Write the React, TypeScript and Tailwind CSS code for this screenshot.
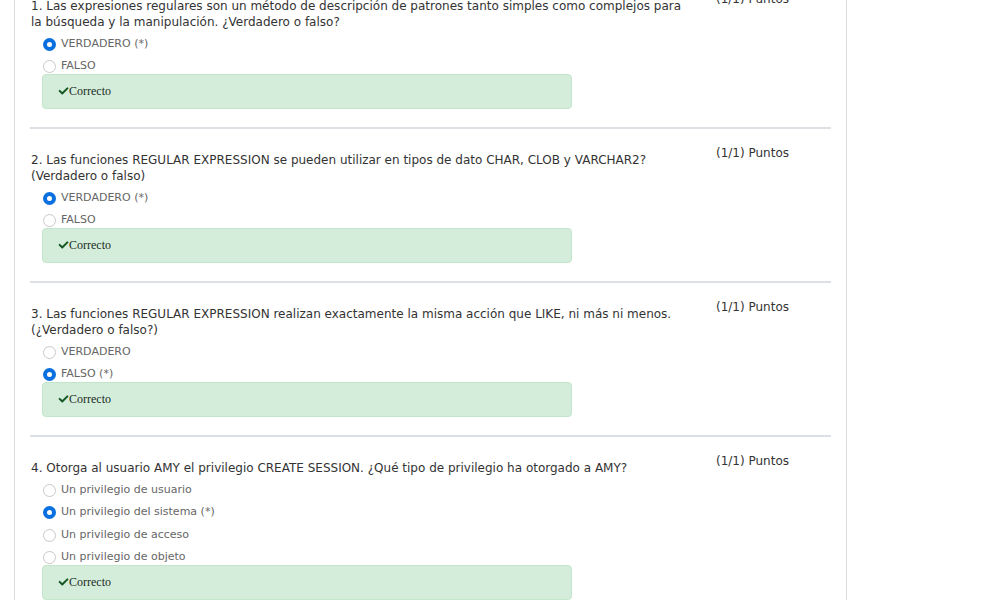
import React from "react";

type Question = {
  id: number;
  text: string;
  options: string[];
  selected: number;
};

const questions: Question[] = [
  {
    id: 1,
    text: "1. Las expresiones regulares son un método de descripción de patrones tanto simples como complejos para la búsqueda y la manipulación. ¿Verdadero o falso?",
    options: ["VERDADERO (*)", "FALSO"],
    selected: 0,
  },
  {
    id: 2,
    text: "2. Las funciones REGULAR EXPRESSION se pueden utilizar en tipos de dato CHAR, CLOB y VARCHAR2? (Verdadero o falso)",
    options: ["VERDADERO (*)", "FALSO"],
    selected: 0,
  },
  {
    id: 3,
    text: "3. Las funciones REGULAR EXPRESSION realizan exactamente la misma acción que LIKE, ni más ni menos. (¿Verdadero o falso?)",
    options: ["VERDADERO", "FALSO (*)"],
    selected: 1,
  },
  {
    id: 4,
    text: "4. Otorga al usuario AMY el privilegio CREATE SESSION. ¿Qué tipo de privilegio ha otorgado a AMY?",
    options: [
      "Un privilegio de usuario",
      "Un privilegio del sistema (*)",
      "Un privilegio de acceso",
      "Un privilegio de objeto",
    ],
    selected: 1,
  },
];

const CheckIcon = () => (
  <svg viewBox="0 0 512 512" className="w-[11px] h-[10px] fill-[#155724]">
    <path d="M173.898 439.404l-166.4-166.4c-9.997-9.997-9.997-26.206 0-36.204l36.203-36.204c9.997-9.998 26.207-9.998 36.204 0L192 312.69 432.095 72.596c9.997-9.997 26.207-9.997 36.204 0l36.203 36.204c9.997 9.997 9.997 26.206 0 36.204l-294.4 294.401c-9.998 9.997-26.207 9.997-36.204-.001z" />
  </svg>
);

const Radio: React.FC<{ checked: boolean }> = ({ checked }) =>
  checked ? (
    <span className="w-[13px] h-[13px] rounded-full border-[4px] border-[#0a6fdf] bg-white shrink-0" />
  ) : (
    <span className="w-[13px] h-[13px] rounded-full border border-[#c9c9c9] bg-white shrink-0" />
  );

const QuestionBlock: React.FC<{ q: Question }> = ({ q }) => (
  <div>
    {/* separator */}
    <div className="h-[2px] bg-[#dde0e4]"></div>

    <div className="flex pt-[16px]">
      <div className="w-[666px] pl-px">
        <p className="mt-[7px] w-[657px] text-[12px] leading-[16px] text-[#333]">{q.text}</p>

        <div className="mt-[6px] pl-[12px] flex flex-col gap-[6.5px]">
          {q.options.map((opt, i) => (
            <label key={i} className="flex items-center gap-[5px] h-[16px] text-[11px] text-[#666]">
              <Radio checked={i === q.selected} />
              <span>{opt}</span>
            </label>
          ))}
        </div>

        <div className="-mt-px ml-[11px] w-[530px] h-[35px] rounded-[4px] border border-[#c3e6cb] bg-[#d4edda] flex items-center pl-[15px] mb-[18.5px]">
          <CheckIcon />
          <span className="font-['Liberation_Serif',serif] text-[12px] text-[#1b2e1f]">Correcto</span>
        </div>
      </div>

      <div className="ml-[20px] text-[12px] leading-[16px] text-[#333] whitespace-nowrap">(1/1) Puntos</div>
    </div>
  </div>
);

export default function App() {
  return (
    <div className="bg-white h-[600px] overflow-hidden font-['DejaVu_Sans',Verdana,sans-serif]">
      <div className="ml-[14px] w-[833px] border-l border-r border-[#dcdcdc] px-[15px] -mt-[27px] pb-10">
        {questions.map((q) => (
          <QuestionBlock key={q.id} q={q} />
        ))}
      </div>
    </div>
  );
}
